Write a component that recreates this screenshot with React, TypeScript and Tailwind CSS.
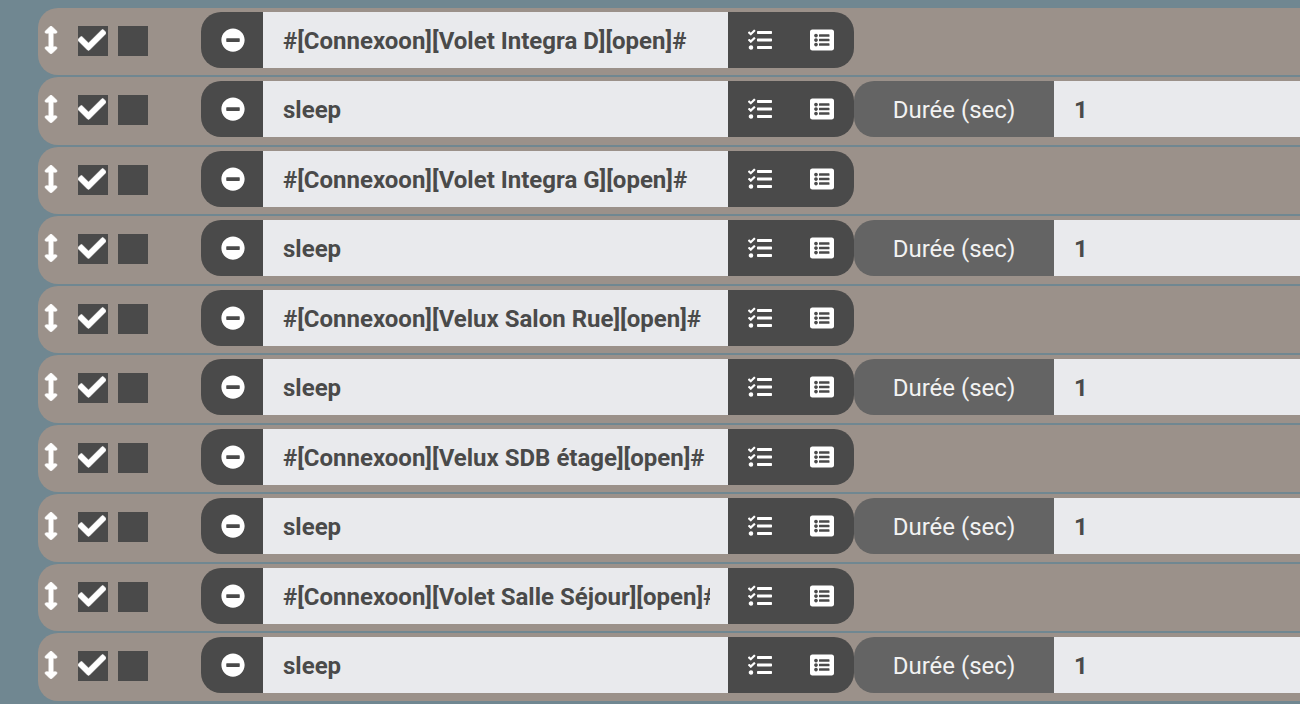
import { useState } from "react";
import { FaArrowsAltV, FaCheck, FaListAlt, FaMinusCircle, FaTasks } from "react-icons/fa";

type Step = { command: string; duration?: string };

const steps: Step[] = [
  { command: "#[Connexoon][Volet Integra D][open]#" },
  { command: "sleep", duration: "1" },
  { command: "#[Connexoon][Volet Integra G][open]#" },
  { command: "sleep", duration: "1" },
  { command: "#[Connexoon][Velux Salon Rue][open]#" },
  { command: "sleep", duration: "1" },
  { command: "#[Connexoon][Velux SDB étage][open]#" },
  { command: "sleep", duration: "1" },
  { command: "#[Connexoon][Volet Salle Séjour][open]#" },
  { command: "sleep", duration: "1" },
];

function Tick({ label, initial }: { label: string; initial: boolean }) {
  const [checked, setChecked] = useState(initial);
  return (
    <label className="grid size-[30px] shrink-0 place-items-center">
      <input
        type="checkbox"
        aria-label={label}
        checked={checked}
        onChange={(e) => setChecked(e.target.checked)}
        className="col-start-1 row-start-1 size-full appearance-none bg-[#4a4a4a]"
      />
      {checked && (
        <FaCheck
          strokeWidth={10}
          strokeLinejoin="round"
          className="pointer-events-none z-10 col-start-1 row-start-1 size-7 self-start justify-self-start text-white"
        />
      )}
    </label>
  );
}

function StepRow({ step, index }: { step: Step; index: number }) {
  const timed = step.duration !== undefined;
  const durationId = `duration-${index}`;
  return (
    <li
      className={`flex items-start rounded-l-[20px] bg-[#9b918a] pt-1 ${timed ? "h-[68px]" : "h-[67px]"}`}
    >
      <button type="button" aria-label="Déplacer" className="flex h-14 w-10 shrink-0 items-center pl-[6px] text-white">
        <FaArrowsAltV strokeWidth={10} className="h-7 w-[14px]" />
      </button>
      <div className="flex h-14 w-[123px] shrink-0 items-center gap-[10px] pt-[2px]">
        <Tick label="Activer" initial={true} />
        <Tick label="Exécuter en parallèle" initial={false} />
      </div>
      <div className="flex h-14 shrink-0">
        <button
          type="button"
          aria-label="Supprimer"
          className="flex w-[62px] items-center justify-center rounded-l-[20px] bg-[#4a4a4a] pl-[2px] text-white"
        >
          <FaMinusCircle className="size-6" />
        </button>
        <input
          type="text"
          aria-label="Commande"
          defaultValue={step.command}
          className="w-[465px] bg-[#e9eaed] pt-[2px] pr-[18px] pl-5 text-2xl font-bold text-[#4a4a4a] outline-none"
        />
        <button
          type="button"
          aria-label="Choisir une action"
          className="flex w-16 items-center justify-center bg-[#4a4a4a] text-white"
        >
          <FaTasks className="size-6" />
        </button>
        <button
          type="button"
          aria-label="Choisir une commande"
          className="flex w-[62px] items-center rounded-r-[20px] bg-[#4a4a4a] pl-[18px] text-white"
        >
          <FaListAlt className="size-6" />
        </button>
      </div>
      {timed && (
        <div className="flex h-14 min-w-0 flex-1">
          <label
            htmlFor={durationId}
            className="flex w-[200px] shrink-0 items-center justify-center rounded-l-[20px] bg-[#646464] pt-[2px] text-2xl text-[#f2f2f2]"
          >
            Durée (sec)
          </label>
          <input
            id={durationId}
            type="text"
            defaultValue={step.duration}
            className="min-w-0 flex-1 bg-[#e9eaed] px-5 pt-[2px] text-2xl font-bold text-[#4a4a4a] outline-none"
          />
        </div>
      )}
    </li>
  );
}

export default function App() {
  return (
    <main className="min-h-screen bg-[#708791] pt-2 pl-[38px] font-['Roboto',sans-serif]">
      <ul className="flex flex-col gap-[2px]">
        {steps.map((step, i) => (
          <StepRow key={i} step={step} index={i} />
        ))}
      </ul>
    </main>
  );
}
